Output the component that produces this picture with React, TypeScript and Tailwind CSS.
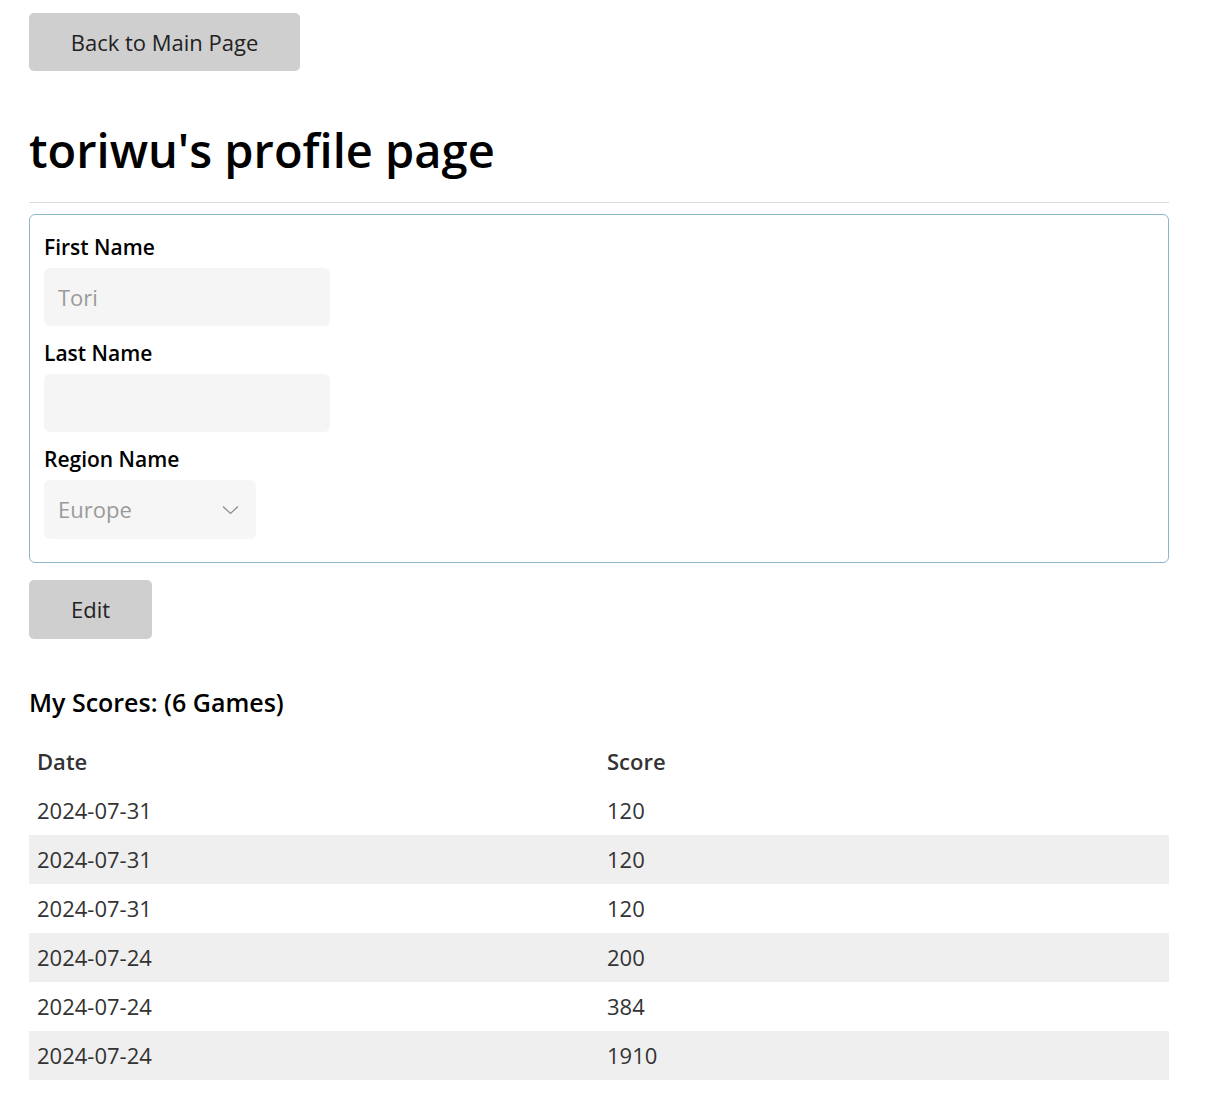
import React from "react";

const rows = [
  { date: "2024-07-31", score: "120" },
  { date: "2024-07-31", score: "120" },
  { date: "2024-07-31", score: "120" },
  { date: "2024-07-24", score: "200" },
  { date: "2024-07-24", score: "384" },
  { date: "2024-07-24", score: "1910" },
];

export default function App() {
  return (
    <div className="bg-white min-h-[1106px] font-['Open_Sans',sans-serif] text-black">
      <div className="ml-[29px] w-[1140px] pt-[13px]">
        <button className="h-[58px] w-[271px] rounded-[5px] bg-[#d0cfd0] text-[22px] text-[#222]">
          Back to Main Page
        </button>
        <h1 className="mt-[47px] text-[47px] font-semibold leading-[64px]">toriwu's profile page</h1>
        <div className="mt-[20px] h-px bg-[#dcdcdc]" />
        <div className="mt-[11px] rounded-[6px] border border-[#8bb6cc] px-[14px] pt-[18px] pb-[23px]">
          <div className="text-[21px] font-semibold leading-[28px]">First Name</div>
          <div className="mt-[7px] flex h-[58px] w-[286px] items-center rounded-[6px] bg-[#f5f5f5] px-[14px] text-[22px] text-[#9a9a9a]">
            Tori
          </div>
          <div className="mt-[13px] text-[21px] font-semibold leading-[28px]">Last Name</div>
          <div className="mt-[7px] h-[58px] w-[286px] rounded-[6px] bg-[#f5f5f5]" />
          <div className="mt-[13px] text-[21px] font-semibold leading-[28px]">Region Name</div>
          <div className="mt-[7px] flex h-[59px] w-[212px] items-center justify-between rounded-[6px] bg-[#f6f6f6] pl-[14px] pr-[17px] text-[22px] text-[#9a9a9a]">
            <span>Europe</span>
            <svg width="17" height="10" viewBox="0 0 17 10" fill="none">
              <path d="M1 1.5 L8.5 8.5 L16 1.5" stroke="#8a8a8a" strokeWidth="1.2" />
            </svg>
          </div>
        </div>
        <button className="mt-[17px] h-[59px] w-[123px] rounded-[5px] bg-[#d0cfd0] text-[22px] text-[#222]">
          Edit
        </button>
        <h2 className="mt-[47px] text-[25px] font-semibold leading-[32px]">My Scores: (6 Games)</h2>
        <table className="mt-[19px] w-full border-collapse text-[22px] text-[#333]">
          <thead>
            <tr className="h-[49px]">
              <th className="w-1/2 px-[8px] text-left font-semibold">Date</th>
              <th className="w-1/2 px-[8px] text-left font-semibold">Score</th>
            </tr>
          </thead>
          <tbody>
            {rows.map((r, i) => (
              <tr key={i} className={i % 2 === 1 ? "h-[49px] bg-[#efefef]" : "h-[49px]"}>
                <td className="px-[8px]">{r.date}</td>
                <td className="px-[8px]">{r.score}</td>
              </tr>
            ))}
          </tbody>
        </table>
      </div>
    </div>
  );
}
